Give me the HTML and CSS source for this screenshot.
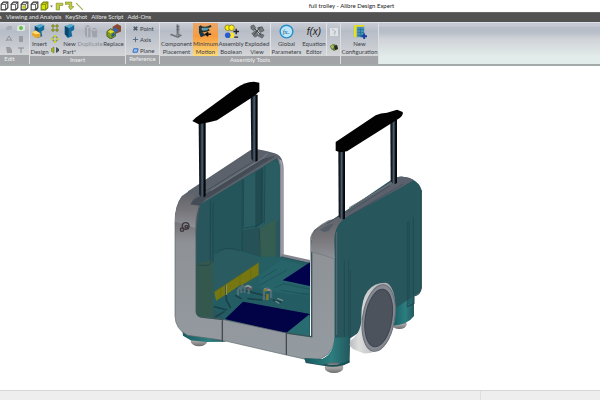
FILE: index.html
```html
<!DOCTYPE html>
<html lang="en">
<head>
<meta charset="utf-8">
<title>full trolley - Alibre Design Expert</title>
<link rel="stylesheet" href="styles.css">
</head>
<body>
<svg class="defs" aria-hidden="true">
  <defs>
    <g id="cube"><path d="M1 3 3 1H7V6L5 8H1Z" fill="#fff" stroke="#333"/><path d="M1 3H5V8M5 3 7 1" fill="none" stroke="#444" stroke-width=".8"/></g>
    <g id="part"><path d="M3 2 8 4 13 1V6L10 8 11 13 6 15 3 11Z" fill="#156b9b"/><path d="M3 2 8 4 13 1 9 0Z" fill="#53a9ca"/><path d="M3 2 7 5V14L3 11Z" fill="#0c466b"/></g>
  </defs>
</svg>
<header class="titlebar">
  <div class="quick">
    <button aria-label="Wireframe"><svg viewBox="0 0 8 9"><use href="#cube"/></svg></button>
    <button aria-label="Hidden lines"><svg viewBox="0 0 8 9"><use href="#cube"/></svg></button>
    <button aria-label="Shaded edges"><svg viewBox="0 0 8 9"><use href="#cube"/><path d="M2 4H5V7H2Z" fill="#c3cb25"/></svg></button>
    <button aria-label="Visible edges"><svg viewBox="0 0 8 9"><use href="#cube"/></svg></button>
    <button aria-label="Shaded"><svg viewBox="0 0 8 9"><path d="M1 3 3 1H7V6L5 8H1Z" fill="#d5e500" stroke="#77831a"/><path d="M1 3H5V8M5 3 7 1" fill="none" stroke="#8a9600"/></svg></button>
    <button class="more" aria-label="More display modes"><svg viewBox="0 0 4 9"><path d="M0 4H3L1.500 6Z" fill="#777"/></svg></button>
    <button aria-label="Sketch corner"><svg viewBox="0 0 8 9"><path d="M1 8V2H7V4H4V8Z" fill="#c4ce38" stroke="#7d8b36" stroke-width=".6"/></svg></button>
    <button aria-label="Sketch step"><svg viewBox="0 0 8 9"><path d="M0 1H6V5H8L5 8 3 5H4V3H0Z" fill="#c4ce38" stroke="#7d8b36" stroke-width=".6"/></svg></button>
    <button aria-label="Axis line"><svg viewBox="0 0 8 9"><path d="M1 2 7 8" stroke="#a8ad52"/></svg></button>
  </div>
  <h1>full trolley - Alibre Design Expert</h1>
</header>
<nav class="menu">
  <a href="#" aria-label="Tools">s</a><a href="#">Viewing and Analysis</a><a href="#">KeyShot</a><a href="#">Alibre Script</a><a href="#">Add-Ons</a>
</nav>
<section class="ribbon">
  <div class="group edit">
    <div class="tools minis">
      <button aria-label="Cut"><svg viewBox="0 0 8 8"><path d="M1 4 3 2H7V5L5 6H1Z" fill="#a9adb6"/></svg></button>
      <button aria-label="Delete"><svg viewBox="0 0 8 8"><path d="M0 3 2 1H8V6L6 7H0Z" fill="#dce7de"/><circle cx="4" cy="4" r="2" fill="#6bbd51"/></svg></button>
      <button aria-label="Copy"><svg viewBox="0 0 8 8"><path d="M1 6 4 1 7 6M2 5H6" fill="none" stroke="#8f9398"/></svg></button>
      <button aria-label="Paste"><svg viewBox="0 0 8 8"><path d="M2 1H6V7H2Z" fill="#999da3"/></svg></button>
      <button aria-label="Edit part"><svg viewBox="0 0 8 8"><path d="M1 1H5L7 4V7H2Z" fill="#999da3"/></svg></button>
      <button aria-label="Text"><svg viewBox="0 0 8 8"><path d="M1 2H7M4 2V7" stroke="#888c91"/></svg></button>
    </div>
    <h2>Edit</h2>
  </div>
  <div class="group insert">
    <div class="tools">
      <button class="tool"><svg viewBox="0 0 16 16"><use href="#part"/><path d="M0 9 4 7 9 10V14L4 15 0 12Z" fill="#e3a62d"/><path d="M0 9 4 7 9 10 4 11Z" fill="#ffda72"/></svg><span>Insert<br>Design</span></button>
      <div class="stack">
        <button aria-label="Pattern"><svg viewBox="0 0 8 8"><path d="M1 1H3V3H1ZM5 1H7V3H5ZM1 5H3V7H1ZM5 5H7V7H5Z" fill="#d7d520" stroke="#77801e"/></svg></button>
        <button aria-label="Circular pattern"><svg viewBox="0 0 8 8"><circle cx="4" cy="4" r="2.500" fill="none" stroke="#747e26"/><path d="M0 3H2V5H0ZM6 3H8V5H6ZM3 0H5V2H3ZM3 6H5V8H3Z" fill="#c8d41f"/></svg></button>
        <button aria-label="Mirror"><svg viewBox="0 0 8 8"><path d="M0 3 3 1V7L0 5Z" fill="#a8b523" stroke="#666c1f" stroke-width=".5"/><path d="M5 1 8 3V5L5 7Z" fill="#43515b"/></svg></button>
      </div>
      <button class="tool"><svg viewBox="0 0 16 16"><use href="#part"/></svg><span>New<br>Part*</span></button>
      <button class="tool off"><svg viewBox="0 0 16 16"><path d="M2 2 5 1 8 3V14H3L2 11ZM9 5 12 4 15 5V14H10Z" fill="#a0a4aa"/><path d="M2 2 5 4 8 3M9 5 12 7 15 5M5 4V14" fill="none" stroke="#c9cbd0"/></svg><span>Duplicate<br>&nbsp;</span></button>
      <button class="tool"><svg viewBox="0 0 16 16"><path d="M7 3 12 0 16 2V8L11 10 7 7Z" fill="#8c4a2d"/><path d="M1 8 5 5 10 8V13L5 16 1 13Z" fill="#7b9c20" stroke="#4d5c29"/><path d="M2 8 5 6 9 8 5 10Z" fill="#e1d330"/><path d="M7 6 11 3V5L14 7 10 9Z" fill="#3565b7"/><path d="M6 11 9 9V12L6 14Z" fill="#24559b"/></svg><span>Replace<br>&nbsp;</span></button>
    </div>
    <h2>Insert</h2>
  </div>
  <div class="group reference">
    <div class="tools rows">
      <button><svg viewBox="0 0 8 8"><path d="M2 2 6 6M6 2 2 6" stroke="#4b5969" stroke-width="2"/></svg>Point</button>
      <button><svg viewBox="0 0 8 8"><path d="M4 1V7M1 4H7" stroke="#4b6681"/></svg>Axis</button>
      <button><svg viewBox="0 0 8 8"><path d="M2 2H7L6 6H1Z" fill="#9bc0ef" stroke="#2c64bd"/></svg>Plane</button>
    </div>
    <h2>Reference</h2>
  </div>
  <div class="group assembly">
    <div class="tools">
      <button class="tool"><svg viewBox="0 0 16 16"><path d="M8 0 11 1V10L14 12 10 15 1 12 2 10 7 12 8 10Z" fill="#8b9096"/><path d="M9 1V10L11 12M2 11 9 14 13 12M8 3H11M8 6H11" fill="none" stroke="#62686e"/></svg><span>Component<br>Placement</span></button>
      <button class="tool active"><svg viewBox="0 0 16 16"><path d="M1 2 4 3V8L8 12 3 14 1 9Z" fill="#19384e"/><path d="M2 2Q7 6 14 2M3 7Q7 9 12 6" fill="none" stroke="#28322f" stroke-width="2"/><path d="M5 4H12L9 7H5Z" fill="#489dbd"/><path d="M14 11H9M11 9 8 11 11 13" fill="none" stroke="#111" stroke-width="1.500"/></svg><span>Minimum<br>Motion</span></button>
      <button class="tool"><svg viewBox="0 0 16 16"><g stroke="#8b8325"><circle cx="4" cy="4" r="3" fill="#fff100"/><circle cx="8" cy="4" r="3" fill="#ffec24"/></g><circle cx="8" cy="12" r="3" fill="#ffe627"/><circle cx="4" cy="12" r="3" fill="#265ed1"/><path d="M10 8H16M13 5V11M11 14H15" stroke="#222" stroke-width="1.500"/></svg><span>Assembly<br>Boolean</span></button>
      <button class="tool"><svg viewBox="0 0 16 16"><path d="M1 2 4 1 6 4 4 7 1 5ZM8 4 13 3 15 7 11 9ZM2 10 6 7 9 12 5 14ZM11 10 15 12 13 15 9 13Z" fill="#74787c" stroke="#454b4e" stroke-width=".6"/><path d="M5 5 12 12M4 12 11 3" stroke="#3e4343"/></svg><span>Exploded<br>View</span></button>
      <button class="tool wide"><svg viewBox="0 0 16 16"><circle cx="8" cy="8" r="7.500" fill="#278fcb"/><circle cx="8" cy="8" r="6" fill="#bae5fa"/><text x="4" y="11" class="param">fxₒ</text></svg><span>Global<br>Parameters</span></button>
      <button class="tool"><i>f(x)</i><span>Equation<br>Editor</span></button>
      <div class="stack end">
        <button aria-label="Select"><svg viewBox="0 0 8 8"><path d="M0 0H8V8H0Z" fill="#dfe2e4"/><path d="M2 1 6 4 4 5 5 7" fill="none" stroke="#b0b4b8"/></svg></button>
        <button aria-label="Interference"><svg viewBox="0 0 8 8"><path d="M0 3 3 1 7 2 8 6 4 8 1 6Z" fill="#68803a"/><path d="M4 3 7 2 8 6 5 7Z" fill="#222d24"/><path d="M1 3 3 2 4 4 2 6Z" fill="#b1bf65"/></svg></button>
      </div>
    </div>
    <h2>Assembly Tools</h2>
  </div>
  <div class="group config">
    <div class="tools">
      <button class="tool"><svg viewBox="0 0 16 16"><path d="M2 1H13V14H2Z" fill="#4c91bd"/><path d="M2 1H5V14H2ZM2 1H13V3H2Z" fill="#e7df22"/><path d="M6 6H13M6 9H13M6 12H13M9 4V14" stroke="#25739e"/><path d="M13 10V16M10 13H16" stroke="#173f9b" stroke-width="2"/></svg><span>New<br>Configuration</span></button>
    </div>
    <h2>&nbsp;</h2>
  </div>
</section>
<main class="workspace">
  <svg class="model" viewBox="0 0 840 930" role="img" aria-label="Trolley model">
    <defs>
      <linearGradient id="pole"><stop offset="0" stop-color="#05080c"/><stop offset=".25" stop-color="#17202b"/><stop offset=".5" stop-color="#53616f"/><stop offset=".65" stop-color="#293642"/><stop offset=".8" stop-color="#05080c"/></linearGradient>
      <linearGradient id="shell" x2="0" y2="1"><stop offset="0" stop-color="#64656c"/><stop offset=".18" stop-color="#777579"/><stop offset=".3" stop-color="#8e9297"/><stop offset="1" stop-color="#949ba0"/></linearGradient>
      <linearGradient id="corner" x2="0" y2="1"><stop offset="0" stop-color="#5e6269"/><stop offset=".5" stop-color="#777579"/><stop offset="1" stop-color="#8e9297"/></linearGradient>
      <linearGradient id="foot"><stop offset="0" stop-color="#175b60"/><stop offset=".6" stop-color="#2c7e80"/><stop offset="1" stop-color="#24595e"/></linearGradient>
      <linearGradient id="caster" x2="0" y2="1"><stop offset="0" stop-color="#5f6769"/><stop offset=".5" stop-color="#aaa5a5"/><stop offset="1" stop-color="#686c6f"/></linearGradient>
      <linearGradient id="tyre"><stop offset="0" stop-color="#b9bbbd"/><stop offset=".2" stop-color="#ddd"/><stop offset="1" stop-color="#9b9da2"/></linearGradient>
    </defs>
    <ellipse cx="117" cy="813" rx="25" ry="16" fill="url(#caster)"/>
    <path d="M66 770 69 797 92 811 140 816 200 815Z" fill="url(#foot)"/>
    <ellipse cx="718" cy="763" rx="22" ry="14" fill="url(#caster)"/>
    <path d="M696 690 762 673V738Q744 764 697 767Z" fill="url(#foot)"/>
    <path d="M340 250Q371 258 371 298V553L450 570V620H345Z" fill="#85858f"/>
    <path d="M349 253Q366 263 366 300V553" fill="none" stroke="#a5a2ad" stroke-width="4"/>
    <path d="M92 402 344 257Q360 267 360 300V560L450 579V815L110 760Z" fill="#28565c"/>
    <path d="M151 388 247 328V478L250 542 159 580Z" fill="#24555a"/>
    <path d="M247 330 337 275Q354 270 359 288V450L306 481 286 474 248 482Z" fill="#295d62"/>
    <path d="M286 307 310 294V457L286 474Z" fill="#204b51"/>
    <path d="M246 482 298 473 297 576 246 546Z" fill="#255157"/>
    <path d="M298 476 347 448V572L298 611Z" fill="#355d51"/>
    <path d="M298 476 302 600M247 328 246 547M251 328 250 470M305 294 304 454M315 289 313 460M248 475 286 469 310 456" fill="none" stroke="#1a434a" stroke-width="2"/>
    <path d="M159 580 246 544 297 560 359 560 450 580V790L190 740 152 710Z" fill="#255e63"/>
    <path d="M161 551Q194 529 238 540L296 570V580L163 663Z" fill="#295b60"/>
    <path d="M112 580 159 570V744H110Z" fill="#34584e"/>
    <path d="M159 570V400M151 392V572M114 586H146L159 570M166 552Q192 525 240 542" fill="none" stroke="#1a434a" stroke-width="2"/>
    <path d="M163 666 296 578V615L168 692Z" fill="#777711"/>
    <path d="M163 666 296 578M168 692 296 615M182 655V681M240 617V647M272 597V627" fill="none" stroke="#656816" stroke-width="2"/>
    <path d="M298 616 364 570 450 590V665L300 689Z" fill="#27646a"/>
    <path d="M364 560 450 581M300 645 380 600M345 653 371 641 450 658M363 661 448 674M302 626 350 598" fill="none" stroke="#1d4b53" stroke-width="2"/>
    <path d="M368 631 450 577V648Z" fill="#02024c"/>
    <path d="M160 700 240 646 450 683V738L360 785 191 749Z" fill="#235d63"/>
    <path d="M199 645V690L212 714M161 710 202 720M166 741 194 724M230 655 320 678M262 686 307 690M225 676 245 686M338 690 364 697" fill="none" stroke="#1a4148" stroke-width="5"/>
    <path d="M200 644V675" stroke="#a29d5c" stroke-width="3"/>
    <path d="M234 676V660Q238 650 246 654M244 669V652Q246 646 254 651V668M266 672V658Q268 649 277 656M312 690V661Q322 649 333 662V684" fill="none" stroke="#506e75" stroke-width="7"/>
    <path d="M256 650 264 647 274 652M312 657 331 661" fill="none" stroke="#94979b" stroke-width="5"/>
    <path d="M312 659 322 662M322 672V690" stroke="#857c2c" stroke-width="7"/>
    <path d="M262 653 274 658" stroke="#7d4d42" stroke-width="4"/>
    <path d="M352 685 369 692M346 693 358 700" stroke="#718b91" stroke-width="4"/>
    <path d="M195 747 249 695 450 732 448 738 379 789 360 786Z" fill="#020246"/>
    <path d="M380 788 448 733V800Z" fill="#286b70"/>
    <path d="M84 365 274 240Q286 233 344 250 361 256 367 272L350 265 112 408Q105 430 105 472L45 455Q45 405 65 379Z" fill="#5b626b"/>
    <path d="M90 404Q103 382 129 376L306 268 344 257 142 383 116 408Z" fill="#434b55"/>
    <path d="M84 365 274 240M142 384 344 259M138 363 285 271" fill="none" stroke="#3b454f" stroke-width="2"/>
    <path d="M152 362 307 265 322 251" fill="none" stroke="#757a82" stroke-width="3"/>
    <path d="M69 377Q45 407 45 455V738Q46 778 83 796L184 810 379 855 455 872Q517 865 524 810V520Q522 460 565 438L505 452Q457 477 452 502L455 800 379 789 191 749 123 741Q110 739 109 726V470Q108 428 119 408L90 404 109 367Z" fill="url(#shell)" stroke="#5c686b" stroke-width="2"/>
    <path d="M69 377Q45 410 45 455L105 473Q104 435 119 408L90 404 107 367Z" fill="url(#corner)"/>
    <path d="M109 475V726Q110 741 130 742L191 749M379 789 455 800V510" fill="none" stroke="#38565a" stroke-width="4"/>
    <path d="M187 751V815M379 790V855" stroke="#46494d" stroke-width="4"/>
    <path d="M118 405 109 469V480" fill="none" stroke="#4a575c" stroke-width="3"/>
    <path d="M455 500Q460 475 500 461L679 340Q708 317 729 320 774 326 784 358V655Q781 672 761 678L571 805 568 878 532 894 437 879 433 865 487 867Q524 850 524 800V560Z" fill="#28565d"/>
    <path d="M462 480 527 445 692 335 719 320Q746 319 761 330L731 348 565 438Q525 458 522 508L524 562 456 545V502Z" fill="#5a616c"/>
    <path d="M455 500Q460 475 500 461L527 445Q538 439 565 438 524 459 523 510L524 565 452 546Z" fill="url(#corner)"/>
    <path d="M479 479 504 465 523 460 505 483 491 486Z" fill="#555d66"/>
    <path d="M561 429 690 347M567 438 731 341M501 461 540 435" stroke="#3c4a53" stroke-width="2"/>
    <path d="M568 413 707 331" stroke="#6b727b" stroke-width="3"/>
    <path d="M452 545 490 555 524 567M530 486V795" fill="none" stroke="#6c757a" stroke-width="2"/>
    <path d="M553 570V851M566 573V805M571 600V802M742 455V709M747 452V702M760 440V677" fill="none" stroke="#1c474c" stroke-width="2"/>
    <path d="M784 360V654Q781 675 762 678V700L741 710" fill="none" stroke="#21484e" stroke-width="3"/>
    <path d="M523 803Q523 851 485 868L433 865Q459 889 495 882L568 878V801Z" fill="url(#foot)"/>
    <ellipse cx="522" cy="893" rx="28" ry="16" fill="url(#caster)"/>
    <path d="M495 884Q530 895 568 873" fill="none" stroke="#175258" stroke-width="5"/>
    <path d="M604 736Q606 638 677 638C704 644 715 708 697 769 682 827 648 854 610 850L580 838Q561 825 574 810 607 785 604 736Z" fill="url(#tyre)"/>
    <ellipse cx="656" cy="744" rx="48" ry="101" transform="rotate(9 656 744)" fill="#858991" stroke="#696d75" stroke-width="3"/>
    <ellipse cx="656" cy="744" rx="40" ry="87" transform="rotate(9 656 744)" fill="#4d535d" stroke="#3e4550" stroke-width="3"/>
    <g fill="url(#pole)"><path d="M116 158H137V379Q125 387 118 374Z"/><path d="M272 74H293V272Q281 280 274 266Z"/><path d="M535 242H555V446Q544 453 536 439Z"/><path d="M691 150H711V339Q700 347 692 333Z"/></g>
    <path d="M97 153 107 143 229 54Q254 36 280 35L298 38V64L286 76 171 151 147 157 116 163Z" fill="#020203"/>
    <path d="M527 216 647 136Q662 129 681 128L711 119 728 126Q731 135 718 145L561 244 540 247 527 242Z" fill="#020203"/>
    <g fill="none" stroke="#3d373c" stroke-width="4"><circle cx="77" cy="468" r="10"/><circle cx="66" cy="479" r="5"/><circle cx="79" cy="470" r="4"/></g>
  </svg>
</main>
<footer class="status"><span></span><span></span></footer>
</body>
</html>
```
FILE: styles.css
```css
* { box-sizing: border-box; }
body {
  margin: 0;
  min-height: 100vh;
  display: flex;
  flex-direction: column;
  overflow: hidden;
  background: #fff;
  color: #3c4148;
  font: 6px/8px Lato, "Open Sans", sans-serif;
}
.defs { position: absolute; width: 0; height: 0; }
button {
  display: block;
  margin: 0;
  padding: 0;
  border: 0;
  background: none;
  color: inherit;
  font: inherit;
}
svg { display: block; }
h1, h2 { margin: 0; font: inherit; }
.titlebar {
  display: grid;
  grid-template-columns: 1fr auto 1fr;
  align-items: center;
  height: 12px;
}
.titlebar h1 { margin-left: 103px; color: #222; }
.quick { display: flex; gap: 1px; }
.quick svg { width: 9px; height: 10px; }
.quick .more svg { width: 4px; }
.menu {
  display: flex;
  gap: 4px;
  height: 10px;
  padding-left: 1px;
  background: #525252;
  border-top: 1px solid #686868;
  white-space: nowrap;
}
.menu a { color: #e9e9e9; text-decoration: none; }
.menu a:first-child { width: 1px; text-indent: -2px; }
.ribbon {
  display: flex;
  height: 44px;
  border-top: 1px solid #dfe1ea;
  border-bottom: 2px solid #a3aaa9;
  background: linear-gradient(#c6c9d4 0 3px, #b8bec8 4px 9px, #d0d3d8 16px, #e2ecea 34px);
}
.group {
  display: flex;
  flex-direction: column;
  flex: none;
  border-right: 1px solid #dcdee0;
  background: linear-gradient(#c9ccd5, #b7bdc7 8px, #c6c9cf 22px, #d4d6d8 33px);
}
.group h2 {
  height: 9px;
  color: #f0f0f0;
  background: #a2a4a7;
  text-align: center;
}
.tools { display: flex; flex: 1; }
.tool {
  display: flex;
  flex-direction: column;
  align-items: center;
  flex: 1;
  min-width: 0;
  padding-top: 1px;
  white-space: nowrap;
}
.tool svg { width: 15px; height: 15px; }
.tool span { margin: 1px -4px 0; text-align: center; line-height: 8px; }
.tool i { height: 15px; font: italic 10px/15px "Liberation Sans", sans-serif; color: #222; }
.active { background: linear-gradient(#e9a76b, #f79c3e 40%, #ffdb78); }
.off { color: #8b9097; }
.edit { width: 30px; }
.edit h2 { padding-right: 10px; }
.minis {
  display: grid;
  grid-template-columns: 8px 8px;
  grid-template-rows: repeat(3, 8px);
  gap: 3px 4px;
  padding: 1px 0 0 5px;
}
.insert { width: 96px; }
.insert .tools { display: grid; grid-template-columns: 19px 12px 17px 24px 23px; }
.stack {
  display: flex;
  flex-direction: column;
  align-items: center;
  gap: 3px;
  padding-top: 1px;
}
.stack svg { width: 8px; height: 8px; }
.reference { width: 34px; }
.rows { flex-direction: column; padding: 2px 0 0 6px; gap: 3px; }
.rows button { display: flex; gap: 1px; height: 8px; }
.rows svg { width: 7px; height: 7px; }
.assembly { width: 181px; }
.assembly .tools { display: grid; grid-template-columns: 33px 25px 26px 26px 32px 24px 14px; }
.wide { border-left: 1px solid #e0e2e3; }
.end { gap: 7px; padding-top: 5px; border-left: 1px solid #e0e2e3; }
.config { width: 38px; }
.param { font: italic 7px "Liberation Serif", serif; fill: #16506f; }
.workspace {
  display: flex;
  flex: 1;
  justify-content: center;
  align-items: flex-start;
  padding-top: 4px;
}
.model { width: 46.67%; height: auto; }
.status {
  display: grid;
  grid-template-columns: 4fr 1fr;
  height: 10px;
  border-top: 1px solid #d5d7d7;
  background: #eee;
}
.status span + span { border-left: 1px solid #dfdfdf; }
```
